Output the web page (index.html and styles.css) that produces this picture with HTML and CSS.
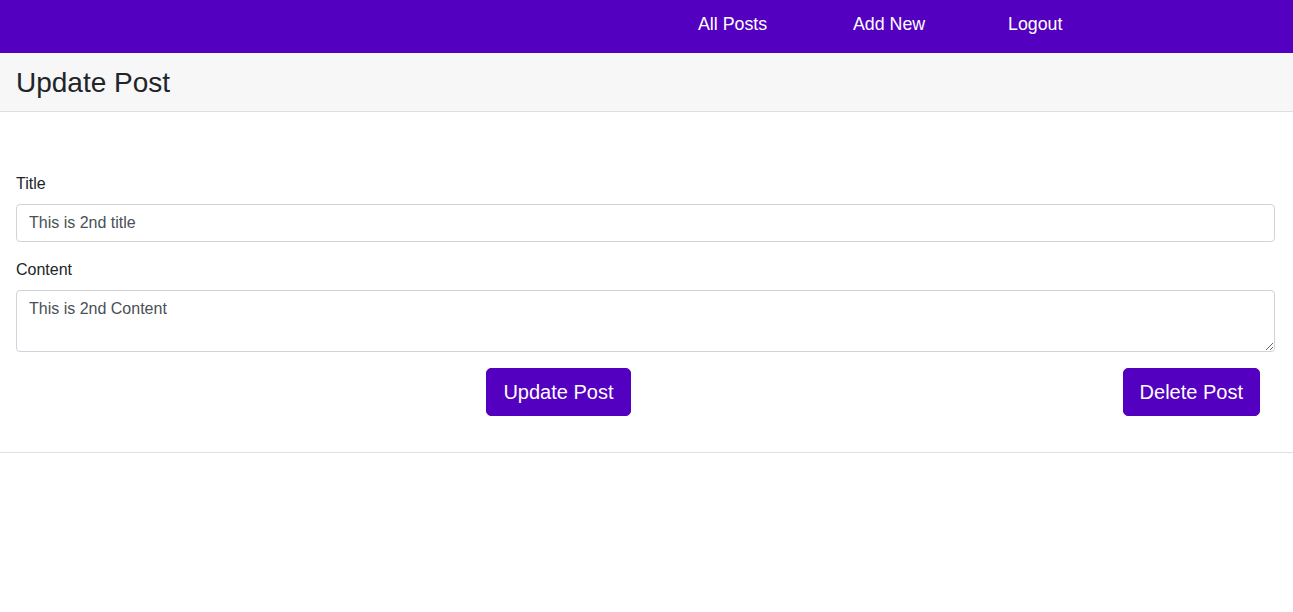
FILE: index.html
```html
<!DOCTYPE html>
<html lang="en">
<head>
<meta charset="utf-8">
<title>Update Post</title>
<link rel="stylesheet" href="styles.css">
</head>
<body>
<nav class="navbar">
  <ul class="nav-links">
    <li><a href="#">All Posts</a></li>
    <li><a href="#">Add New</a></li>
    <li><a href="#">Logout</a></li>
  </ul>
</nav>
<div class="card">
  <div class="card-header">
    <h3 class="card-title">Update Post</h3>
  </div>
  <div class="card-body">
    <form class="post-form">
      <div class="form-group">
        <label for="title">Title</label>
        <input id="title" class="form-control" type="text" value="This is 2nd title">
      </div>
      <div class="form-group">
        <label for="content">Content</label>
        <textarea id="content" class="form-control" rows="2">This is 2nd Content</textarea>
      </div>
      <div class="btn-row">
        <div class="btn-col"><button type="button" class="btn">Update Post</button></div>
        <div class="btn-col"><button type="button" class="btn">Delete Post</button></div>
      </div>
    </form>
  </div>
</div>
</body>
</html>
```
FILE: styles.css
```css
* { box-sizing: border-box; }
html, body {
  margin: 0;
  padding: 0;
  background: #ffffff;
  font-family: "Liberation Sans", Arial, sans-serif;
  font-size: 16px;
  line-height: 1.5;
  color: #212529;
}
.navbar {
  background: #5400c0;
  height: 53px;
  display: flex;
  justify-content: flex-end;
  align-items: center;
  padding-right: 130px;
}
.nav-links {
  list-style: none;
  margin: 0;
  padding: 0;
  display: grid;
  grid-template-columns: repeat(3, 155px);
  padding-bottom: 5px;
}
.nav-links a {
  color: #ffffff;
  text-decoration: none;
  font-size: 17.8px;
}
.card {
  border-bottom: 1px solid #dfdfdf;
}
.card-header {
  background: #f7f7f7;
  border-bottom: 1px solid #dfdfdf;
  padding: 13px 16px 11px;
}
.card-title {
  margin: 0;
  font-size: 28px;
  font-weight: 400;
  line-height: 1.2;
  color: #212529;
}
.card-body {
  padding: 60px 18px 20px 16px;
}
.post-form { margin: 0; }
.form-group {
  margin-bottom: 16px;
}
.form-group label {
  display: block;
  margin-bottom: 8px;
}
.form-control {
  display: block;
  width: 100%;
  padding: 6px 12px;
  font-family: inherit;
  font-size: 16px;
  line-height: 1.5;
  color: #495057;
  background: #ffffff;
  border: 1px solid #ced4da;
  border-radius: 4px;
  margin: 0;
}
input.form-control { height: 38px; }
textarea.form-control { height: 62px; }
.btn-row {
  display: grid;
  grid-template-columns: 1fr 1fr;
  margin-bottom: 16px;
}
.btn-col {
  display: flex;
  justify-content: flex-end;
  padding-right: 15px;
}
.btn {
  background: #5400c0;
  color: #ffffff;
  border: 1px solid #5400c0;
  border-radius: 5px;
  font-family: inherit;
  font-size: 20px;
  line-height: 1.5;
  padding: 7px 16px;
  height: 48px;
  cursor: pointer;
}
```
